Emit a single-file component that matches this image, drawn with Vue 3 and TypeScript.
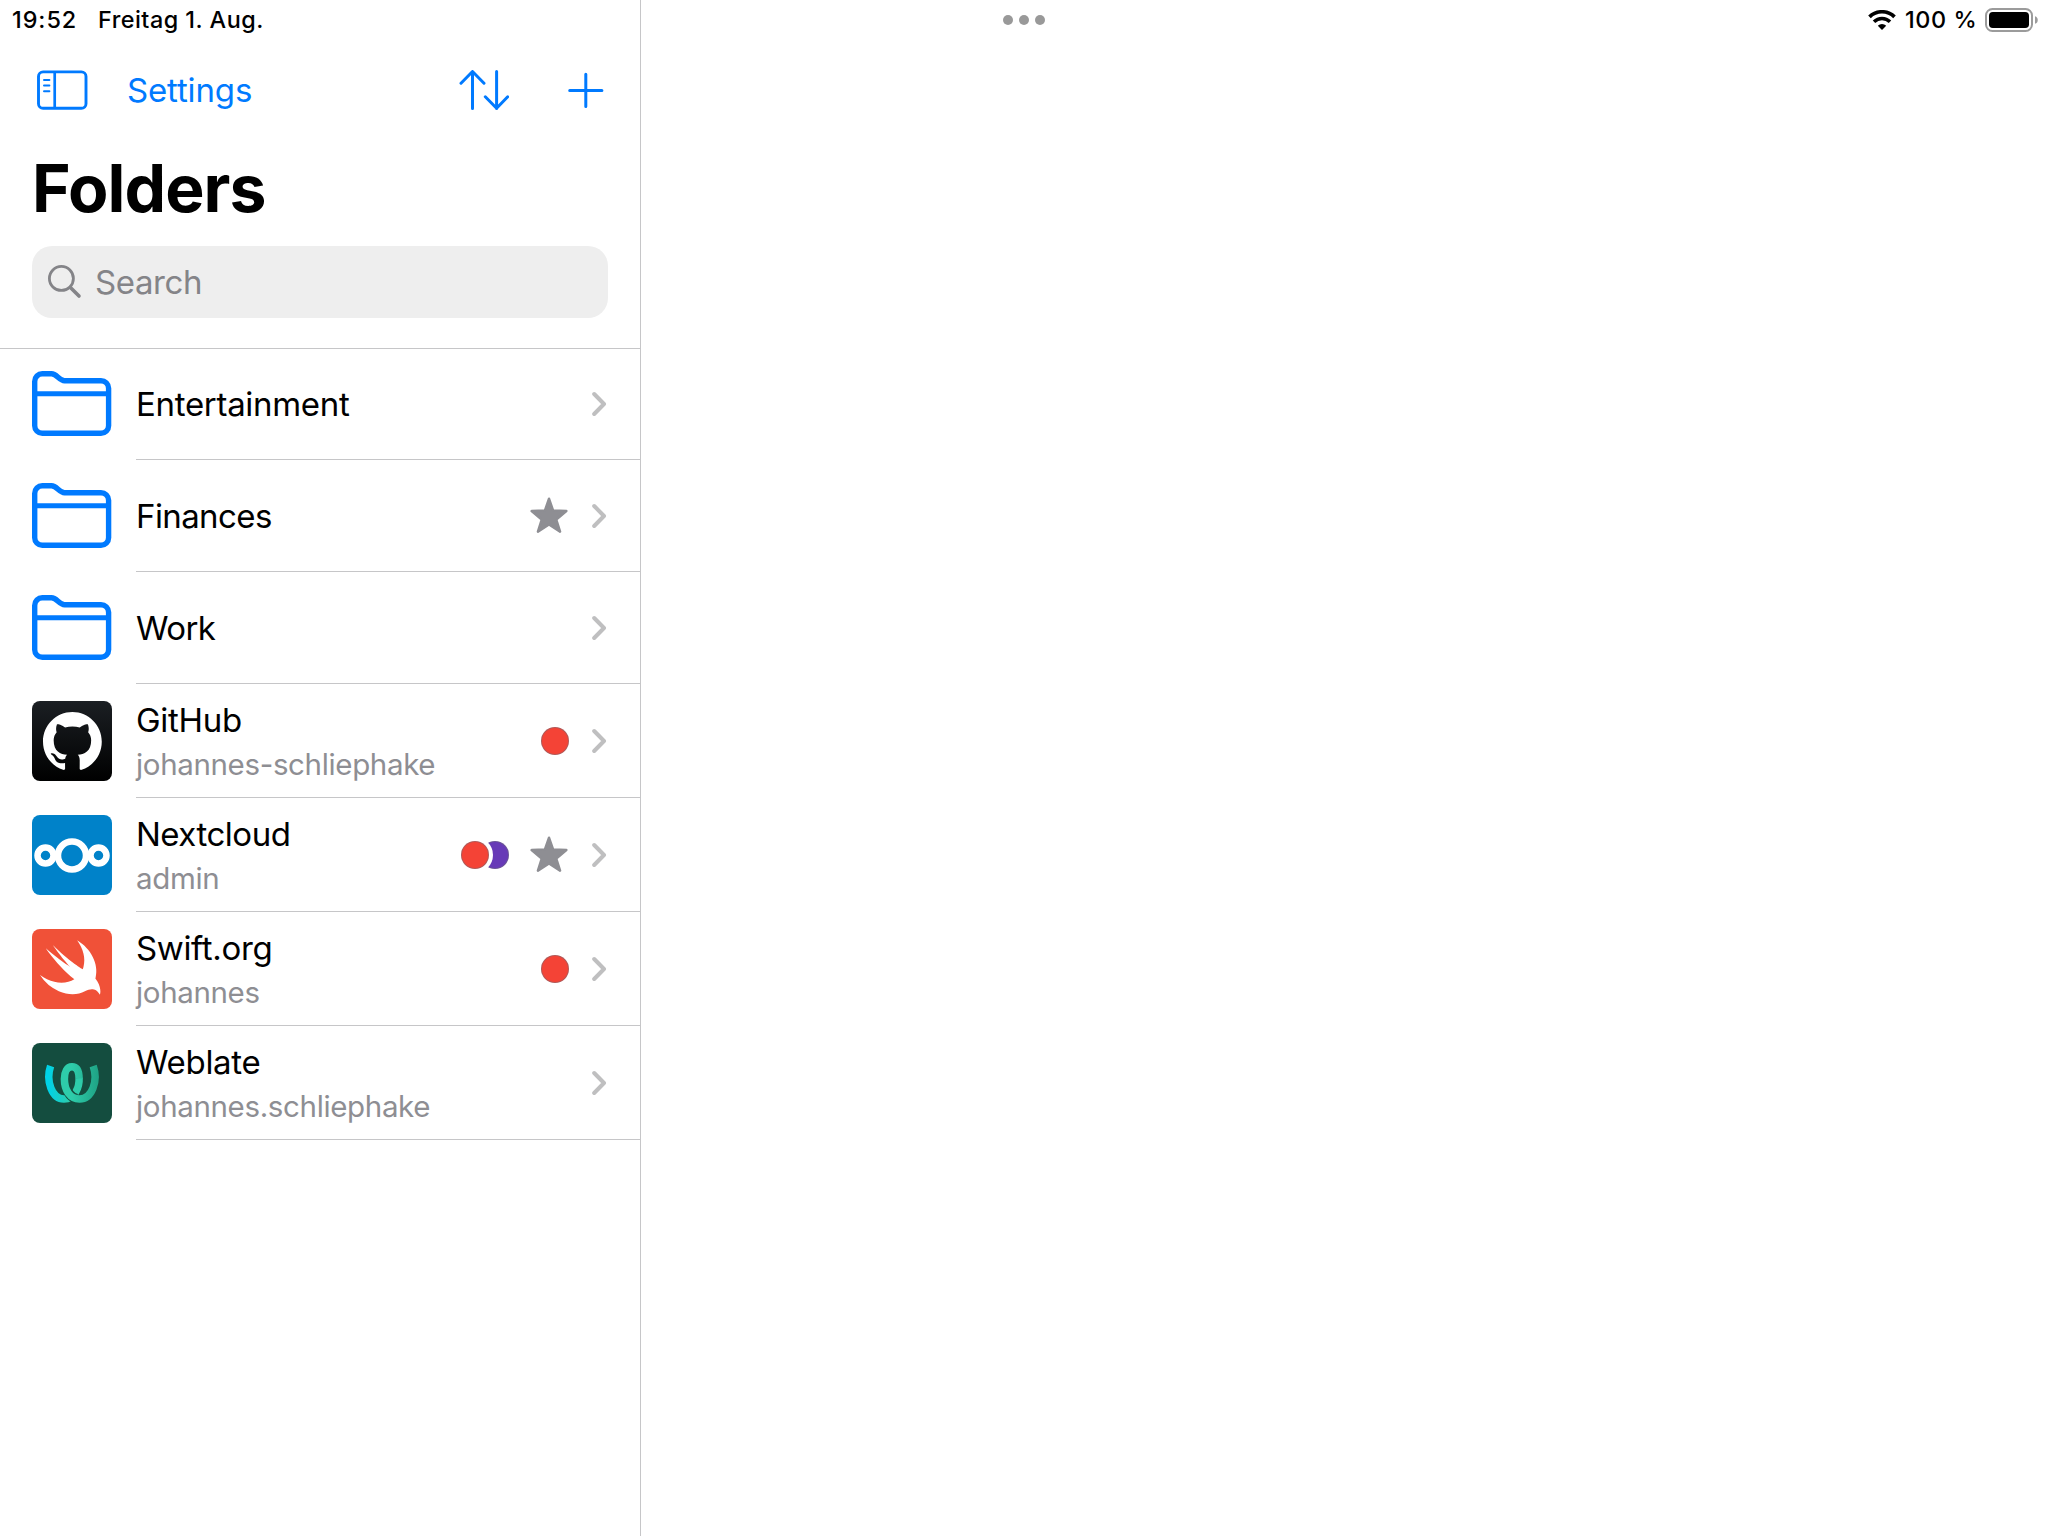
<script setup lang="ts">
type Icon = 'folder' | 'github' | 'nextcloud' | 'swift' | 'weblate'

interface Entry {
  title: string
  tracking: number
  subtitle?: string
  icon: Icon
  tags?: string[]
  favorite?: boolean
}

const RED = '#f44336'
const PURPLE = '#673ab7'

const entries: Entry[] = [
  { title: 'Entertainment', tracking: -0.3, icon: 'folder' },
  { title: 'Finances', tracking: -0.6, icon: 'folder', favorite: true },
  { title: 'Work', tracking: -0.6, icon: 'folder' },
  { title: 'GitHub', tracking: -0.3, subtitle: 'johannes-schliephake', icon: 'github', tags: [RED] },
  { title: 'Nextcloud', tracking: -0.5, subtitle: 'admin', icon: 'nextcloud', tags: [RED, PURPLE], favorite: true },
  { title: 'Swift.org', tracking: -0.35, subtitle: 'johannes', icon: 'swift', tags: [RED] },
  { title: 'Weblate', tracking: -0.3, subtitle: 'johannes.schliephake', icon: 'weblate' },
]
</script>

<template>
  <div class="screen">
    <aside class="sidebar">
      <div class="status status-left">
        <span class="time">19:52</span>
        <span class="date">Freitag 1. Aug.</span>
      </div>

      <header class="header">
        <nav class="toolbar">
          <svg class="panel-icon" width="51" height="40" viewBox="0 0 51 40" fill="none" stroke="currentColor" stroke-linecap="round">
            <rect x="1.5" y="1.9" width="47.5" height="36.4" rx="4.6" stroke-width="2.9" />
            <path d="M17.7 2v36" stroke-width="2.7" stroke-linecap="butt" />
            <path d="M7 10.1h5.4M7 15.6h5.4M7 21.2h5.4" stroke-width="2" />
          </svg>
          <span class="settings">Settings</span>
          <svg class="sort-icon" width="50" height="42" viewBox="0 0 50 42" fill="none" stroke="currentColor" stroke-width="3" stroke-linecap="round" stroke-linejoin="round">
            <path d="M13.5 39.5v-37M2 14.2 13.5 2.5 25 14.2M37.6 2.5v37M26.3 27.8 37.6 39.3 48.7 27.8" />
          </svg>
          <svg class="plus-icon" width="36" height="36" viewBox="0 0 36 36" fill="none" stroke="currentColor" stroke-width="3" stroke-linecap="round">
            <path d="M1.7 18.400h32.200M17.800 2.300v32.200" />
          </svg>
        </nav>
        <h1 class="title">Folders</h1>
        <div class="search">
          <svg width="34" height="34" viewBox="0 0 34 34" fill="none" stroke="currentColor" stroke-linecap="round">
            <circle cx="13.4" cy="13.4" r="12" stroke-width="2.800" />
            <path d="m22.4 22.4 8.600 8.600" stroke-width="3.600" />
          </svg>
          <span class="placeholder">Search</span>
        </div>
      </header>

      <ul class="list">
        <li v-for="entry in entries" :key="entry.title" class="row" :class="{ tall: entry.subtitle }">
          <div class="thumb" :class="entry.icon">
            <svg v-if="entry.icon === 'folder'" width="80" height="66" viewBox="0 0 80 66" fill="none" stroke="#007aff" stroke-width="5.4">
              <path d="M2.7 10.4a7.6 7.6 0 0 1 7.6-7.6H19.5C25 2.8 27 9.7 32.500 9.7H69a7.600 7.600 0 0 1 7.600 7.600V54.700a7.600 7.600 0 0 1-7.600 7.600H10.300a7.600 7.600 0 0 1-7.600-7.600Z" />
              <path d="M3 22.700h73" stroke-width="5" />
            </svg>
            <svg v-else-if="entry.icon === 'github'" width="59" height="58" viewBox="0 0 98 96" fill="#fff">
              <path fill-rule="evenodd" d="M48.854 0C21.839 0 0 22 0 49.217c0 21.756 13.993 40.172 33.405 46.69 2.427.49 3.316-1.059 3.316-2.362 0-1.141-.08-5.052-.08-9.127-13.59 2.934-16.42-5.867-16.42-5.867-2.184-5.704-5.42-7.17-5.42-7.17-4.448-3.015.324-3.015.324-3.015 4.934.326 7.523 5.052 7.523 5.052 4.367 7.496 11.404 5.378 14.235 4.074.404-3.178 1.699-5.378 3.074-6.6-10.839-1.141-22.243-5.378-22.243-24.283 0-5.378 1.94-9.778 5.014-13.2-.485-1.222-2.184-6.275.486-13.038 0 0 4.125-1.304 13.426 5.052a46.97 46.97 0 0 1 12.214-1.63c4.125 0 8.33.571 12.213 1.63 9.302-6.356 13.427-5.052 13.427-5.052 2.67 6.763.97 11.816.485 13.038 3.155 3.422 5.015 7.822 5.015 13.2 0 18.905-11.404 23.06-22.324 24.283 1.78 1.548 3.316 4.481 3.316 9.126 0 6.6-.08 11.897-.08 13.526 0 1.304.89 2.853 3.316 2.364 19.412-6.52 33.405-24.935 33.405-46.691C97.707 22 75.788 0 48.854 0z" />
            </svg>
            <svg v-else-if="entry.icon === 'nextcloud'" width="80" height="80" viewBox="0 0 80 80" fill="none" stroke="#fff" stroke-width="6.500">
              <circle cx="40" cy="40.500" r="14" />
              <circle cx="13.500" cy="40.500" r="8" />
              <circle cx="66.500" cy="40.500" r="8" />
            </svg>
            <svg v-else-if="entry.icon === 'swift'" width="80" height="80" viewBox="0 0 24 24" fill="#fff">
              <path d="M13.543 3.410c4.114 2.470 6.545 7.162 5.549 11.131-.024.093-.05.181-.076.272l.002.001c2.062 2.538 1.500 5.258 1.236 4.745-1.072-2.086-3.066-1.568-4.088-1.043a6.803 6.803 0 0 1-.281.158l-.02.012-.002.002c-2.115 1.123-4.957 1.205-7.812-.022a12.568 12.568 0 0 1-5.640-4.838c.649.480 1.350.902 2.097 1.252 3.019 1.414 6.051 1.311 8.197-.002C9.651 12.730 7.101 9.670 5.146 7.191a10.628 10.628 0 0 1-1.005-1.384c2.340 2.142 6.038 4.830 7.365 5.576C8.690 8.408 6.208 4.743 6.324 4.860c4.436 4.466 8.527 6.996 8.527 6.996.154.085.27.154.36.213.085-.215.16-.437.224-.668.708-2.588-.09-5.548-1.893-7.992z" />
            </svg>
            <svg v-else width="80" height="80" viewBox="0 0 80 80" fill="none" stroke-width="7.500">
              <defs>
                <linearGradient id="wl-left" gradientUnits="userSpaceOnUse" x1="13" y1="0" x2="38" y2="0">
                  <stop offset="0.150" stop-color="#00d2e6" />
                  <stop offset="1" stop-color="#2eccaa" />
                </linearGradient>
                <linearGradient id="wl-right" gradientUnits="userSpaceOnUse" x1="40" y1="0" x2="66" y2="0">
                  <stop offset="0" stop-color="#2eccaa" />
                  <stop offset="1" stop-color="#1fa385" />
                </linearGradient>
              </defs>
              <path d="M18.600 23C13.500 38 20 56 32 56 43 56 47.500 44 47.100 35" stroke="url(#wl-left)" />
              <path d="M33.400 43C35.500 50 40 55 45 55.900" stroke="#144d3f" stroke-width="10" />
              <path d="M47.100 35.500C47 28 44.500 23.800 40 23.800 35 23.800 32.400 29 32.400 36 32.400 47 38 56 47.500 56 60 56 66.500 38 61.200 23" stroke="url(#wl-right)" />
            </svg>
          </div>

          <div class="content">
            <div class="labels">
              <span class="name" :style="{ letterSpacing: entry.tracking + 'px' }">{{ entry.title }}</span>
              <span v-if="entry.subtitle" class="user">{{ entry.subtitle }}</span>
            </div>
            <div v-if="entry.tags" class="tags">
              <i v-for="(color, i) in entry.tags" :key="color" class="tag" :style="{ background: color, zIndex: 9 - i }" />
            </div>
            <svg v-if="entry.favorite" class="star" width="38" height="36" viewBox="0 0 38 36" fill="#8e8e93" stroke="#8e8e93" stroke-width="2.400" stroke-linejoin="round">
              <path d="M19 1.700 23.100 13.500 36.400 14 26.300 22.600 30.100 34.700 19 27.500 7.900 34.700 11.700 22.600 1.600 14 14.900 13.500Z" />
            </svg>
            <svg class="chevron" width="15" height="26" viewBox="0 0 15 26" fill="none" stroke="#bfbfc0" stroke-width="4" stroke-linecap="round" stroke-linejoin="round">
              <path d="M2.200 3 12 13 2.200 23" />
            </svg>
          </div>
        </li>
      </ul>
    </aside>

    <main class="detail">
      <div class="dots"><i /><i /><i /></div>
      <div class="status status-right">
        <svg class="wifi" width="28" height="20" viewBox="0 0 28 20" fill="none" stroke="#000">
          <path d="M1.500 6.900a17.800 17.800 0 0 1 25 0" stroke-width="3.700" />
          <path d="M6 11.700a11.400 11.400 0 0 1 16 0" stroke-width="3.500" />
          <path d="M14 20 9.800 15.700a6 6 0 0 1 8.400 0Z" fill="#000" stroke="none" />
        </svg>
        <span class="percent">100 %</span>
        <svg class="battery" width="54" height="24" viewBox="0 0 54 24">
          <rect x="1" y="1" width="46" height="22" rx="6.500" fill="none" stroke="#9b9b9b" stroke-width="2" />
          <rect x="4" y="4" width="40" height="16" rx="3.800" />
          <path d="M50 8.200c3.700 1 3.700 6.600 0 7.600Z" fill="#9b9b9b" />
        </svg>
      </div>
    </main>
  </div>
</template>

<style>
body {
  margin: 0;
  background: #fff;
}
</style>

<style scoped>
.screen {
  display: flex;
  width: 2048px;
  height: 1536px;
  overflow: hidden;
  background: #fff;
  color: #000;
  font-family: Inter, 'Liberation Sans', sans-serif;
  white-space: nowrap;
}
.sidebar {
  box-sizing: border-box;
  width: 641px;
  border-right: 1px solid #c6c6c8;
}
.detail {
  display: flex;
  flex: 1;
  align-items: flex-start;
  justify-content: space-between;
}
.status {
  display: flex;
  align-items: center;
  height: 40px;
  font-size: 23.400px;
  font-weight: 500;
}
.status span {
  padding-bottom: 2px;
}
.status-left {
  padding-left: 12px;
}
.time {
  width: 86px;
  letter-spacing: 0.950px;
}
.date {
  letter-spacing: 0.480px;
}
.status-right {
  padding-right: 9px;
}
.percent {
  width: 71px;
  margin: 0 9px;
  letter-spacing: 0.600px;
}
.dots {
  display: flex;
  gap: 6px;
  padding: 15px 0 0 362px;
}
.dots i {
  width: 10px;
  height: 10px;
  border-radius: 50%;
  background: #999;
}
.header {
  box-sizing: border-box;
  height: 309px;
  margin-bottom: -1px;
  border-bottom: 1px solid #c6c6c8;
}
.toolbar {
  display: flex;
  align-items: center;
  height: 100px;
  padding: 0 36px 0 37px;
  color: #007aff;
}
.settings {
  margin-left: 39px;
  font-size: 33px;
  letter-spacing: -0.150px;
}
.sort-icon {
  margin-left: auto;
}
.plus-icon {
  margin-left: 59px;
}
.title {
  margin: 0;
  padding: 8px 0 0 32px;
  font-size: 66px;
  line-height: 80px;
  font-weight: 700;
  letter-spacing: -0.900px;
}
.search {
  display: flex;
  align-items: center;
  height: 72px;
  margin: 18px 32px 0;
  padding-left: 16px;
  border-radius: 20px;
  background: #eee;
  color: #848488;
}
.placeholder {
  margin-left: 13px;
  font-size: 33px;
  letter-spacing: -0.400px;
}
.list {
  margin: 0;
  padding: 0;
  list-style: none;
}
.row {
  display: flex;
  height: 112px;
  padding-left: 32px;
}
.row.tall {
  height: 114px;
}
.thumb {
  display: flex;
  align-items: center;
  justify-content: center;
  align-self: center;
  width: 80px;
  height: 80px;
  margin-right: 24px;
  border-radius: 8px;
  overflow: hidden;
}
.github {
  background: linear-gradient(#1b1f23, #000);
}
.nextcloud {
  background: #0082c9;
}
.swift {
  background: #f05138;
}
.weblate {
  background: #144d3f;
}
.content {
  box-sizing: border-box;
  display: flex;
  flex: 1;
  align-items: center;
  padding-right: 33px;
  border-bottom: 1px solid #c6c6c8;
}
.labels {
  display: flex;
  flex: 1;
  flex-direction: column;
}
.tall .labels {
  padding-top: 2px;
}
.name {
  font-size: 33px;
  line-height: 44px;
}
.user {
  color: #8e8e93;
  font-size: 29.500px;
  line-height: 44px;
  letter-spacing: -0.350px;
}
.tags {
  display: flex;
}
.tag {
  position: relative;
  box-sizing: border-box;
  width: 28px;
  height: 28px;
  border: 1px solid rgba(110, 110, 120, 0.500);
  border-radius: 50%;
  box-shadow: 0 0 0 4px #fff;
}
.tag + .tag {
  margin-left: -8px;
}
.star {
  margin: 0 1px 2px 21px;
}
.chevron {
  margin-left: 23px;
}
</style>
